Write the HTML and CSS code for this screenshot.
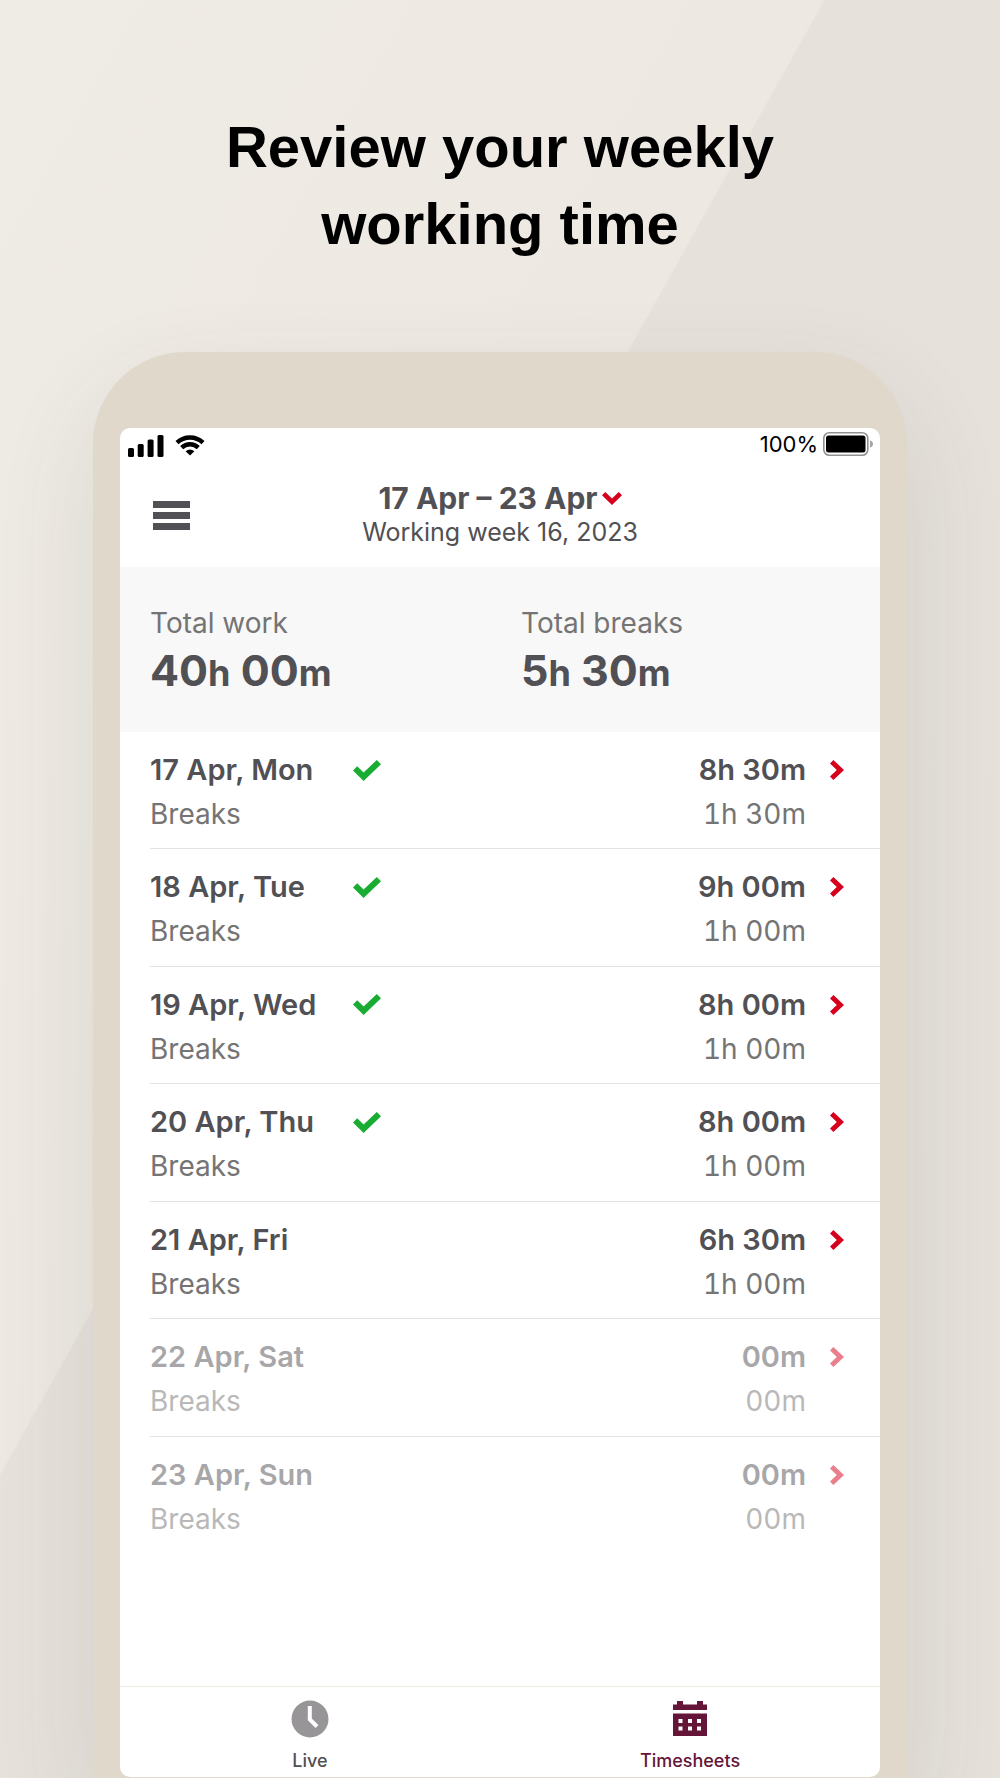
FILE: index.html
```html
<!DOCTYPE html>
<html lang="en">
<head>
<meta charset="utf-8">
<meta name="viewport" content="width=device-width, initial-scale=1">
<title>Timesheets</title>
<link rel="stylesheet" href="styles.css">
</head>
<body>
<svg class="sprite" aria-hidden="true">
  <symbol id="check" viewBox="0 0 28 21"><path d="M0 10.5 4.2 6.2 10.6 12.4 23.8 0 28 4.2 10.6 21Z"/></symbol>
  <symbol id="chevron" viewBox="0 0 14 20"><path d="M0 3.4 3.4 0 14 10 3.4 20 0 16.6 6.8 10Z"/></symbol>
</svg>
<main class="promo">
  <h1 class="headline">Review your weekly<br>working time</h1>
  <div class="phone">
    <div class="screen">
      <div class="status">
        <svg class="signal" viewBox="0 0 36 22" aria-label="Signal"><rect y="13" width="6" height="9" rx="1.5"/><rect x="9.7" y="9" width="6" height="13" rx="1.5"/><rect x="19.6" y="4.5" width="6" height="17.5" rx="1.5"/><rect x="29.5" width="6" height="22" rx="1.5"/></svg>
        <svg class="wifi" viewBox="0 0 30 21" aria-label="Wi-Fi"><g fill="none" stroke="#000" stroke-width="4.4"><path d="M2 7.6C9.4.7 20.6.7 28 7.6"/><path d="M6.7 12.6C11.5 8.2 18.5 8.2 23.3 12.6"/></g><path d="M15 20.6 10.6 16.3Q15 12.6 19.4 16.3Z"/></svg>
        <span class="charge">100%</span>
        <svg class="battery" viewBox="0 0 50 24" aria-label="Battery"><rect x=".8" y=".8" width="44" height="22.4" rx="5.5" fill="#fff" stroke="#919191" stroke-width="1.6"/><rect x="3" y="3.5" width="39.5" height="17" rx="2.5"/><path d="M47 8.5Q50 9.5 50 12T47 15.5Z" fill="#a5a5a5"/></svg>
      </div>
      <header class="bar">
        <button class="menu" type="button" aria-label="Menu"><svg viewBox="0 0 37 29"><path d="M0 0H37V7H0ZM0 11H37V18H0ZM0 22H37V29H0Z"/></svg></button>
        <div class="week">
          <button class="range" type="button">17 Apr – 23 Apr <svg viewBox="0 0 20 13"><path d="M0 3.2 3.3 0 10 6.4 16.7 0 20 3.2 10 13Z"/></svg></button>
          <p class="week-no">Working week 16, 2023</p>
        </div>
      </header>
      <dl class="totals">
        <div class="total"><dt>Total work</dt><dd>40<small>h</small> 00<small>m</small></dd></div>
        <div class="total"><dt>Total breaks</dt><dd>5<small>h</small> 30<small>m</small></dd></div>
      </dl>
      <ul class="days">
        <li><a class="day" href="#17"><b>17 Apr, Mon</b><svg class="check"><use href="#check"/></svg><b class="time">8h 30m</b><svg class="go"><use href="#chevron"/></svg><span>Breaks</span><span class="time">1h 30m</span></a></li>
        <li><a class="day" href="#18"><b>18 Apr, Tue</b><svg class="check"><use href="#check"/></svg><b class="time">9h 00m</b><svg class="go"><use href="#chevron"/></svg><span>Breaks</span><span class="time">1h 00m</span></a></li>
        <li><a class="day" href="#19"><b>19 Apr, Wed</b><svg class="check"><use href="#check"/></svg><b class="time">8h 00m</b><svg class="go"><use href="#chevron"/></svg><span>Breaks</span><span class="time">1h 00m</span></a></li>
        <li><a class="day" href="#20"><b>20 Apr, Thu</b><svg class="check"><use href="#check"/></svg><b class="time">8h 00m</b><svg class="go"><use href="#chevron"/></svg><span>Breaks</span><span class="time">1h 00m</span></a></li>
        <li><a class="day" href="#21"><b>21 Apr, Fri</b><b class="time">6h 30m</b><svg class="go"><use href="#chevron"/></svg><span>Breaks</span><span class="time">1h 00m</span></a></li>
        <li><a class="day off" href="#22"><b>22 Apr, Sat</b><b class="time">00m</b><svg class="go"><use href="#chevron"/></svg><span>Breaks</span><span class="time">00m</span></a></li>
        <li><a class="day off" href="#23"><b>23 Apr, Sun</b><b class="time">00m</b><svg class="go"><use href="#chevron"/></svg><span>Breaks</span><span class="time">00m</span></a></li>
      </ul>
      <nav class="tabs">
        <a class="tab" href="#live"><svg viewBox="0 0 38 38"><circle cx="19" cy="19" r="18.5" fill="#979598"/><path d="M18.8 6V19.3L26 26.5" fill="none" stroke="#fff" stroke-width="4"/></svg>Live</a>
        <a class="tab active" href="#timesheets" aria-current="page"><svg viewBox="0 0 38 38"><path fill-rule="evenodd" d="M2 4.5H6V1H12V4.5H26V1H32V4.5H36V10H2ZM2 13.5H36V36H2ZM7.5 19V23H11.5V19ZM17 19V23H21V19ZM26 19V23H30V19ZM7.5 26.5V30.5H11.5V26.5ZM17 26.5V30.5H21V26.5ZM26 26.5V30.5H30V26.5Z"/></svg>Timesheets</a>
      </nav>
    </div>
  </div>
</main>
</body>
</html>
```
FILE: styles.css
```css
* { box-sizing: border-box; }

body {
  margin: 0;
  font-family: Inter, "Liberation Sans", sans-serif;
  color: #515054;
}

h1, p, dl, dd, ul { margin: 0; padding: 0; }
ul { list-style: none; }
a { color: inherit; text-decoration: none; }
svg { display: block; flex: none; }
button {
  padding: 0;
  border: 0;
  background: none;
  font: inherit;
  color: inherit;
}

.sprite {
  position: absolute;
  width: 0;
  height: 0;
}

.promo {
  min-height: 100vh;
  display: flex;
  flex-direction: column;
  align-items: center;
  padding-top: 108px;
  overflow: hidden;
  background: linear-gradient(119.2deg, #efece5 0%, #ede9e2 41.3%, #e6e1db 41.4%, #e5e1da 100%);
}

.headline {
  margin-bottom: 90px;
  font: bold 58px/77px "Liberation Sans", sans-serif;
  color: #000;
  text-align: center;
}

.phone {
  flex: 1;
  display: flex;
  flex-direction: column;
  width: 81.4%;
  padding: 76px 27px 1px;
  border-radius: 92px 92px 0 0;
  background: #e0d8cb;
  box-shadow: 0 40px 100px rgba(70, 75, 70, .12);
}

.screen {
  flex: 1;
  display: flex;
  flex-direction: column;
  border-radius: 10px;
  background: #fff;
  overflow: hidden;
}

.status {
  display: flex;
  align-items: center;
  height: 35px;
  padding: 0 7px 0 8px;
  font-size: 22px;
  font-weight: 400;
  line-height: 32px;
  color: #000;
}
.signal { width: 36px; height: 22px; }
.wifi { width: 30px; height: 21px; margin-left: 11px; }
.charge { margin-left: auto; }
.charge, .battery { margin-bottom: 3px; }
.battery { width: 50px; height: 24px; margin-left: 5px; }

.bar {
  display: grid;
  grid-template-columns: 40px 1fr 40px;
  align-items: center;
  padding: 18px 33px;
}
.menu svg { width: 37px; height: 29px; fill: #515054; }
.week { text-align: center; }
.range {
  display: inline-flex;
  align-items: center;
  gap: 4px;
  font-size: 30px;
  font-weight: 700;
  line-height: 34px;
}
.range svg { width: 20px; height: 13px; fill: #d6001c; }
.week-no { font-size: 25px; line-height: 34px; }

.totals {
  display: grid;
  grid-template-columns: 1fr 1fr;
  padding: 36px 0 31px 30px;
  background: #f8f8f8;
}
.total:first-child { margin-right: -6px; }
.total + .total { padding-left: 6px; }
dt { font-size: 28px; line-height: 40px; color: #757474; }
dd { font-size: 43px; line-height: 55px; font-weight: 700; }
dd small { font-size: 36px; }

.days {
  display: grid;
  grid-auto-rows: 1fr;
  min-height: 822px;
  padding-left: 30px;
}
.days li:not(:last-child) { border-bottom: 1px solid #e2e2e2; }
.day {
  display: grid;
  grid-template-columns: 203px 1fr auto 14px;
  align-items: center;
  padding: 16px 36px 12px 0;
  font-size: 28px;
  line-height: 44px;
  color: #757474;
}
.day b { font-size: 29px; font-weight: 600; color: #515054; }
.day .time {
  grid-column: 3;
  margin-right: 24px;
  text-align: right;
}
.day span.time { font-variant-numeric: tabular-nums; }
.check { width: 28px; height: 21px; fill: #18ad32; }
.go { grid-column: 4; width: 14px; height: 20px; fill: #d6001c; }
.off { opacity: .5; }

.tabs {
  display: flex;
  margin-top: auto;
  border-top: 1px solid #edeae4;
}
.tab {
  flex: 1;
  display: flex;
  flex-direction: column;
  align-items: center;
  gap: 11px;
  padding: 13px 0 4px;
  font-size: 18px;
  font-weight: 500;
  line-height: 24px;
}
.tab svg { width: 38px; height: 38px; fill: #651537; }
.active { color: #651537; }
```
